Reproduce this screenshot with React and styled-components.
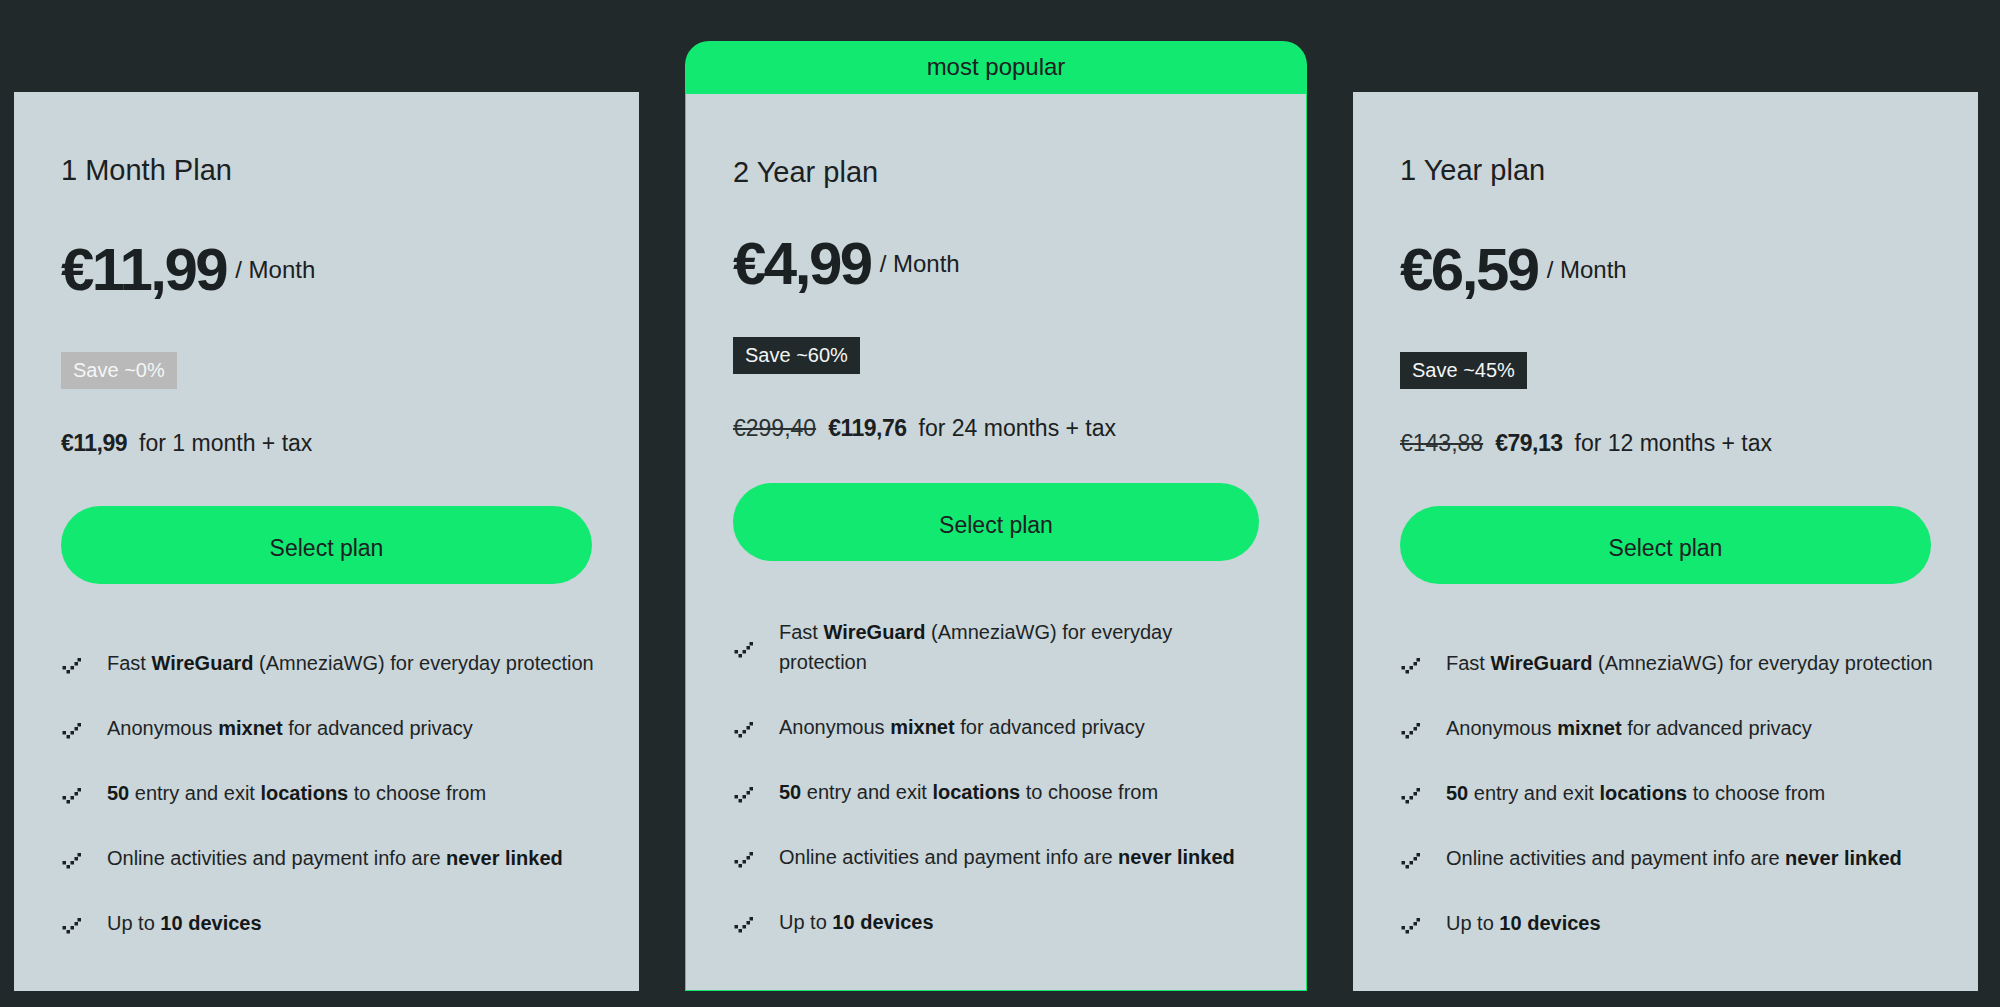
import styled, { createGlobalStyle } from 'styled-components';

const GlobalStyle = createGlobalStyle`
  body {
    margin: 0;
    background-color: #22292b;
    font-family: 'Liberation Sans', Arial, sans-serif;
    color: #1b2022;
  }
`;

const GREEN = '#11e971';

const plans = [
  {
    id: 'month',
    title: '1 Month Plan',
    price: '€11,99',
    save: 'Save ~0%',
    saveMuted: true,
    oldTotal: null,
    total: '€11,99',
    period: 'for 1 month + tax',
  },
  {
    id: 'two-years',
    title: '2 Year plan',
    price: '€4,99',
    save: 'Save ~60%',
    oldTotal: '€299,40',
    total: '€119,76',
    period: 'for 24 months + tax',
    featured: true,
  },
  {
    id: 'year',
    title: '1 Year plan',
    price: '€6,59',
    save: 'Save ~45%',
    oldTotal: '€143,88',
    total: '€79,13',
    period: 'for 12 months + tax',
  },
];

const features = [
  <>
    Fast <b>WireGuard</b> (AmneziaWG) for everyday protection
  </>,
  <>
    Anonymous <b>mixnet</b> for advanced privacy
  </>,
  <>
    <b>50</b> entry and exit <b>locations</b> to choose from
  </>,
  <>
    Online activities and payment info are <b>never linked</b>
  </>,
  <>
    Up to <b>10 devices</b>
  </>,
];

const Wrapper = styled.main`
  display: grid;
  grid-template-columns: 625px 622px 625px;
  column-gap: 46px;
  align-items: end;
  padding: 40px 0 16px 14px;
  box-sizing: border-box;
  min-height: 100vh;
`;

const Card = styled.section`
  display: flex;
  flex-direction: column;
`;

const Ribbon = styled.div`
  height: 53px;
  background-color: ${GREEN};
  border-radius: 24px 24px 0 0;
  display: flex;
  align-items: center;
  justify-content: center;
  padding-bottom: 2px;
  box-sizing: border-box;
  font-size: 24px;
  color: #1b2022;
`;

const CardBody = styled.div`
  height: ${(p) => (p.$featured ? '897px' : '899px')};
  box-sizing: border-box;
  background-color: #cad6d9;
  border: ${(p) => (p.$featured ? `1px solid ${GREEN}` : 'none')};
  border-top: none;
  padding: 60px 47px 53px;
  display: flex;
  flex-direction: column;
`;

const PlanTitle = styled.h2`
  margin: 0;
  font-size: 29px;
  line-height: 36px;
  font-weight: 400;
`;

const PriceRow = styled.div`
  margin-top: ${(p) => (p.$featured ? '44px' : '52px')};
  display: flex;
  align-items: center;
  height: 60px;
`;

const Price = styled.span`
  font-size: 60px;
  line-height: 60px;
  font-weight: 700;
  letter-spacing: -2.5px;
`;

const Per = styled.span`
  font-size: 24px;
  line-height: 28px;
  margin-left: 9px;
`;

const SaveBadge = styled.span`
  margin-top: ${(p) => (p.$featured ? '43px' : '52px')};
  align-self: flex-start;
  height: 37px;
  line-height: 37px;
  padding: 0 12px;
  font-size: 20px;
  color: #f4f6f6;
  background-color: ${(p) => (p.$muted ? '#b9b9b9' : '#22292b')};
`;

const Totals = styled.div`
  margin-top: ${(p) => (p.$featured ? '40px' : '40px')};
  display: flex;
  align-items: baseline;
  gap: 12px;
  font-size: 23px;
  line-height: 28px;
`;

const OldTotal = styled.s`
  color: #2b3133;
`;

const Total = styled.b`
  font-weight: 700;
  letter-spacing: -0.5px;
`;

const SelectButton = styled.button`
  margin-top: ${(p) => (p.$featured ? '41px' : '49px')};
  width: 100%;
  height: 78px;
  border: none;
  border-radius: 39px;
  background-color: ${GREEN};
  color: #1b2022;
  font-family: inherit;
  font-size: 23px;
  padding: 6px 0 0;
  cursor: pointer;
`;

const FeatureList = styled.ul`
  margin: auto 0 0;
  padding: 0;
  list-style: none;
  display: flex;
  flex-direction: column;
  gap: 35px;
`;

const Feature = styled.li`
  display: flex;
  align-items: center;
  gap: 26px;
`;

const CheckIcon = styled.svg`
  flex: none;
  width: 20px;
  height: 17px;
  margin-top: 7px;
`;

const FeatureText = styled.span`
  font-size: 20px;
  line-height: 30px;
  color: #1e2426;
  white-space: ${(p) => (p.$wrap ? 'normal' : 'nowrap')};

  b {
    font-weight: 700;
    color: #141819;
  }
`;

const PixelCheck = () => (
  <CheckIcon viewBox="0 0 20 17" fill="#1b2022">
    <rect x="1.5" y="8" width="3.5" height="3.5" />
    <rect x="5.5" y="12" width="3.5" height="3.5" />
    <rect x="9.5" y="8" width="3.5" height="3.5" />
    <rect x="13.5" y="4" width="3.5" height="3.5" />
    <rect x="16.5" y="0" width="3.5" height="3.5" />
  </CheckIcon>
);

const PlanCard = ({ plan }) => {
  const { featured } = plan;
  return (
    <Card>
      {featured && <Ribbon>most popular</Ribbon>}
      <CardBody $featured={featured}>
        <PlanTitle>{plan.title}</PlanTitle>
        <PriceRow $featured={featured}>
          <Price>{plan.price}</Price>
          <Per>/ Month</Per>
        </PriceRow>
        <SaveBadge $featured={featured} $muted={plan.saveMuted}>
          {plan.save}
        </SaveBadge>
        <Totals $featured={featured}>
          {plan.oldTotal && <OldTotal>{plan.oldTotal}</OldTotal>}
          <Total>{plan.total}</Total>
          <span>{plan.period}</span>
        </Totals>
        <SelectButton $featured={featured}>Select plan</SelectButton>
        <FeatureList>
          {features.map((text, i) => (
            <Feature key={i}>
              <PixelCheck />
              <FeatureText $wrap={featured}>{text}</FeatureText>
            </Feature>
          ))}
        </FeatureList>
      </CardBody>
    </Card>
  );
};

const App = () => {
  return (
    <>
      <GlobalStyle />
      <Wrapper>
        {plans.map((plan) => (
          <PlanCard key={plan.id} plan={plan} />
        ))}
      </Wrapper>
    </>
  );
};

export default App;
